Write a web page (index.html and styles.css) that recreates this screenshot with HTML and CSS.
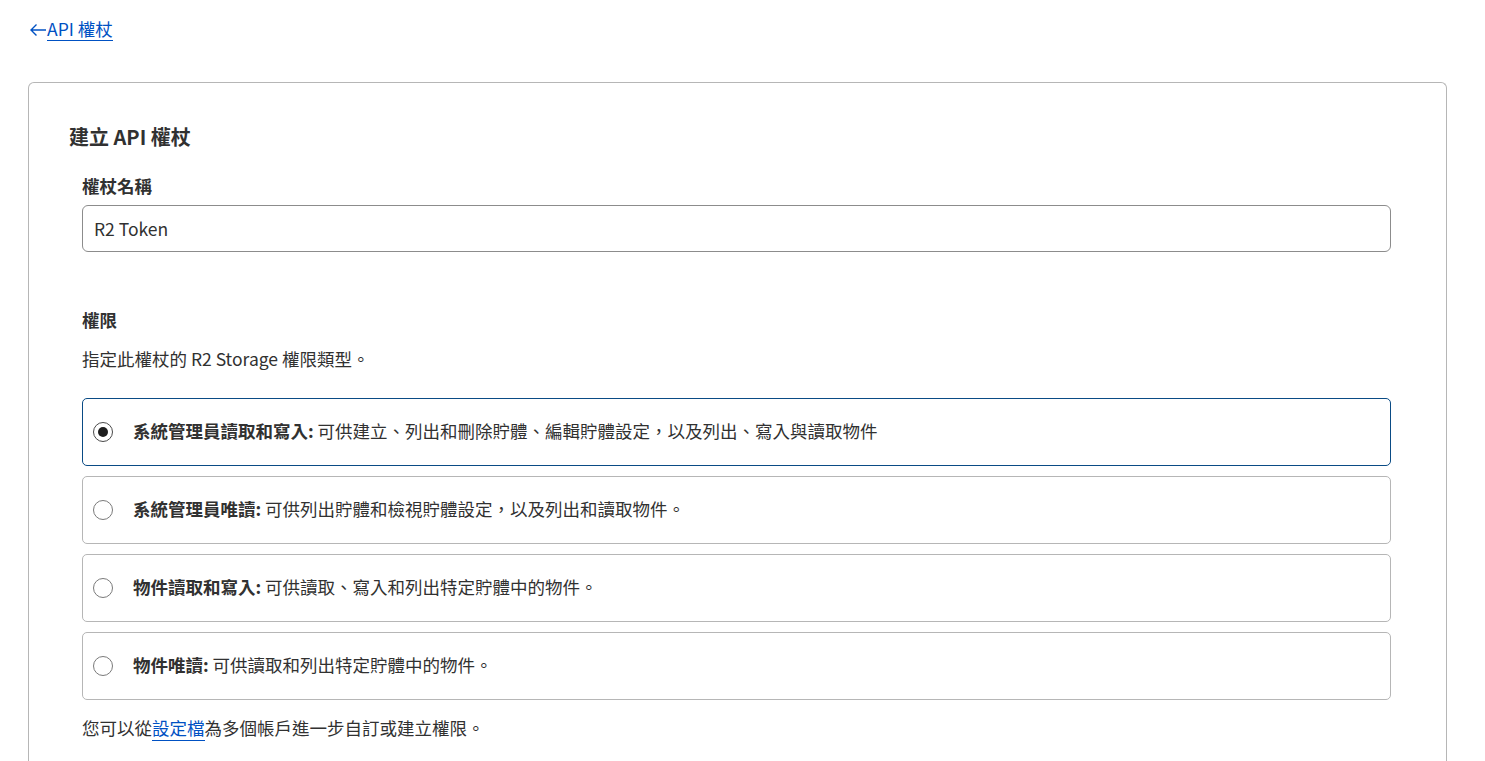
FILE: index.html
```html
<!DOCTYPE html>
<html lang="zh-Hant">
<head>
  <meta charset="UTF-8">
  <meta name="viewport" content="width=device-width, initial-scale=1.0">
  <title>建立 API 權杖</title>
  <link rel="stylesheet" href="styles.css">
</head>
<body>
  <div class="page">
    <!-- Back link -->
    <a class="back-link" href="#">
      <svg class="back-arrow" width="18" height="14" viewBox="0 0 18 14" aria-hidden="true">
        <path d="M17 7H2M7.5 1.5L2 7l5.5 5.5" fill="none" stroke="#0051c3" stroke-width="1.4"/>
      </svg>
      <span class="back-text">API 權杖</span>
    </a>

    <div class="card">
      <h1>建立 API 權杖</h1>

      <div class="form-body">
        <label class="field-label" for="token-name">權杖名稱</label>
        <input id="token-name" class="text-input" type="text" value="R2 Token">

        <div class="section-title">權限</div>
        <p class="section-desc">指定此權杖的 R2 Storage 權限類型。</p>

        <div class="options">
          <label class="option selected">
            <span class="radio checked"></span>
            <span class="option-text"><b>系統管理員讀取和寫入:</b> 可供建立、列出和刪除貯體、編輯貯體設定，以及列出、寫入與讀取物件</span>
          </label>
          <label class="option">
            <span class="radio"></span>
            <span class="option-text"><b>系統管理員唯讀:</b> 可供列出貯體和檢視貯體設定，以及列出和讀取物件。</span>
          </label>
          <label class="option">
            <span class="radio"></span>
            <span class="option-text"><b>物件讀取和寫入:</b> 可供讀取、寫入和列出特定貯體中的物件。</span>
          </label>
          <label class="option">
            <span class="radio"></span>
            <span class="option-text"><b>物件唯讀:</b> 可供讀取和列出特定貯體中的物件。</span>
          </label>
        </div>

        <p class="note">您可以從<a href="#">設定檔</a>為多個帳戶進一步自訂或建立權限。</p>
      </div>
    </div>
  </div>
</body>
</html>
```

FILE: styles.css
```css
body {
  font-family: "Noto Sans CJK TC", "Noto Sans", sans-serif;
  background-color: #fff;
  color: #313131;
  margin: 0;
  padding: 0;
  font-size: 17.5px;
}
.page {
  padding: 17px 38px 0 28px;
}
.back-link {
  display: inline-flex;
  align-items: center;
  color: #0051c3;
  text-decoration: none;
  height: 23px;
}
.back-arrow {
  margin-left: 1px;
  margin-top: 3px;
}
.back-text {
  font-size: 17.5px;
  line-height: 23px;
  border-bottom: 1px solid #0051c3;
}
.card {
  margin-top: 40px;
  border: 1px solid #b6b6b6;
  border-bottom: none;
  border-radius: 6px 6px 0 0;
  padding: 38px 40px 30px 40px;
  height: 680px;
  box-sizing: border-box;
}
h1 {
  margin: 0;
  font-size: 20px;
  font-weight: 700;
  line-height: 32px;
  color: #313131;
}
.form-body {
  margin: 0 15px 0 13px;
}
.field-label {
  display: block;
  margin-top: 22px;
  font-weight: 700;
  line-height: 22px;
}
.text-input {
  display: block;
  width: 100%;
  box-sizing: border-box;
  margin-top: 8px;
  height: 47px;
  border: 1px solid #8c8c8c;
  border-radius: 6px;
  padding: 0 11px;
  font-family: inherit;
  font-size: 17.5px;
  color: #313131;
  outline: none;
}
.section-title {
  margin-top: 55px;
  font-weight: 700;
  line-height: 26px;
}
.section-desc {
  margin: 13px 0 0 0;
  line-height: 26px;
}
.options {
  margin-top: 26px;
  display: flex;
  flex-direction: column;
  gap: 10px;
}
.option {
  display: flex;
  align-items: center;
  height: 68px;
  box-sizing: border-box;
  border: 1px solid #b6b6b6;
  border-radius: 5px;
  padding: 0 10px;
  cursor: pointer;
}
.option.selected {
  border-color: #0a4b85;
}
.radio {
  width: 20px;
  height: 20px;
  box-sizing: border-box;
  border: 1px solid #7a7a7a;
  border-radius: 50%;
  flex-shrink: 0;
  display: flex;
  align-items: center;
  justify-content: center;
}
.radio.checked {
  border-color: #4a4a4a;
}
.radio.checked::after {
  content: "";
  width: 10px;
  height: 10px;
  border-radius: 50%;
  background-color: #1d1d1d;
}
.option-text {
  margin-left: 20px;
  line-height: 24px;
  padding-bottom: 3px;
}
.option-text b {
  font-weight: 700;
}
.note {
  margin: 15px 0 0 0;
  line-height: 26px;
}
.note a {
  color: #0051c3;
  text-decoration: none;
  border-bottom: 1px solid #0051c3;
}
```
